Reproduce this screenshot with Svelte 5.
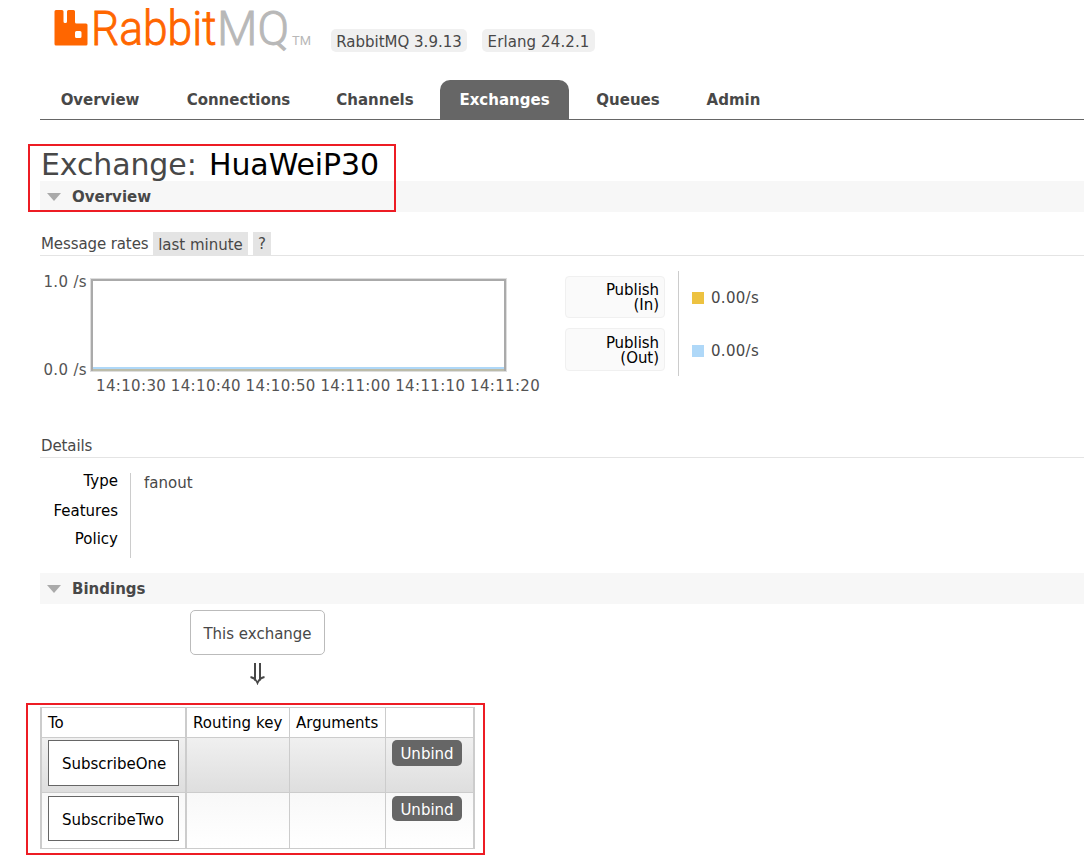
<script>
  const tabs = ['Overview', 'Connections', 'Channels', 'Exchanges', 'Queues', 'Admin'];
  const active = 'Exchanges';
  const times = ['14:10:30', '14:10:40', '14:10:50', '14:11:00', '14:11:10', '14:11:20'];
  const rates = [
    { name: 'Publish', dir: '(In)', color: '#edc240', value: '0.00/s' },
    { name: 'Publish', dir: '(Out)', color: '#afd8f8', value: '0.00/s' }
  ];
  const queues = ['SubscribeOne', 'SubscribeTwo'];
</script>

<div class="page">
  <header>
    <svg class="logo" width="260" height="58" viewBox="0 0 260 58" role="img" aria-label="RabbitMQ">
      <path fill="#f60" fill-rule="evenodd" d="M1.500 10h5.500q1.500 0 1.500 1.500V21.500q0 1.500 1.500 1.500h.5q1.500 0 1.500-1.500V11.500q0-1.500 1.500-1.500h5q1.500 0 1.500 1.500V22q0 1.500 1.500 1.500h9.500q1.500 0 1.500 1.500v19q0 1.500-1.500 1.500h-30q-1.500 0-1.500-1.500v-32.500q0-1.500 1.500-1.500zM21.500 31q-1.500 0-1.500 1.500v4q0 1.500 1.500 1.500h3.500q1.500 0 1.500-1.500v-4q0-1.500-1.500-1.500z" />
      <text x="36" y="45" class="word rabbit" textLength="125.500" lengthAdjust="spacingAndGlyphs">Rabbit</text>
      <text x="162" y="45" class="word mq" textLength="72" lengthAdjust="spacingAndGlyphs">MQ</text>
      <text x="237" y="45" class="tm" fill="#b8b8b8" textLength="19" lengthAdjust="spacingAndGlyphs">TM</text>
    </svg>
    <span class="badge first">RabbitMQ 3.9.13</span>
    <span class="badge second">Erlang 24.2.1</span>
  </header>

  <nav>
    {#each tabs as tab}
      <span class="tab" class:active={tab === active}>{tab}</span>
    {/each}
  </nav>

  <h1>Exchange: <b>HuaWeiP30</b></h1>
  <h2><i class="tri"></i>Overview</h2>

  <div class="subhead rates-head">
    <span class="label">Message rates</span><span class="chip">last minute</span><span class="chip help">?</span>
  </div>

  <section class="rates">
    <div class="yaxis"><span>1.0 /s</span><span>0.0 /s</span></div>
    <div class="plot">
      <div class="chart"><div class="in"></div><div class="out"></div></div>
      <div class="xaxis">{#each times as t}<span>{t}</span>{/each}</div>
    </div>
    <div class="buttons">
      {#each rates as r}<div class="rate"><span>{r.name}</span><span>{r.dir}</span></div>{/each}
    </div>
    <div class="values">
      {#each rates as r}
        <div class="value"><i class="swatch" style="background:{r.color}"></i>{r.value}</div>
      {/each}
    </div>
  </section>

  <div class="subhead details-head"><span class="label">Details</span></div>
  <section class="details">
    <div class="keys"><span>Type</span><span>Features</span><span>Policy</span></div>
    <div class="facts">fanout</div>
  </section>

  <h2><i class="tri"></i>Bindings</h2>
  <div class="bindings">
    <div class="this">This exchange</div>
    <svg class="arrow" width="17" height="22" viewBox="0 0 17 22" fill="none" stroke="#484848">
      <path stroke-width="2" d="M6 0v17.500M11 0v17.500" />
      <path stroke-width="1.800" d="M1.500 14q5 1 7 6q2-5 7-6" />
    </svg>
  </div>

  <div class="table">
    <div class="cell head">To</div>
    <div class="cell head thick routing">Routing key</div>
    <div class="cell head">Arguments</div>
    <div class="cell head"></div>
    {#each queues as q, i}
      <div class="cell" class:alt={i === 0} class:plain={i === 1}><span class="queue">{q}</span></div>
      <div class="cell thick" class:alt={i === 0} class:plain={i === 1}></div>
      <div class="cell" class:alt={i === 0} class:plain={i === 1}></div>
      <div class="cell" class:alt={i === 0} class:plain={i === 1}><button>Unbind</button></div>
    {/each}
  </div>

  <div class="mark title-mark"></div>
  <div class="mark table-mark"></div>
</div>

<style>
  :global(body) { margin: 0; background: #fff; overflow: hidden; }
  * { box-sizing: border-box; }
  .page {
    position: relative; width: 1084px; height: 867px; padding-left: 40px; overflow: hidden;
    font: 15px/18px Verdana, "DejaVu Sans", sans-serif; color: #484848; white-space: nowrap;
  }
  header { display: flex; height: 80px; padding-left: 15px; }
  .logo { flex: none; overflow: visible; }
  .word { font: 300 48px Roboto, sans-serif; stroke-width: 0.9px; }
  .rabbit { fill: #f60; stroke: #f60; }
  .mq { fill: #b8b8b8; stroke: #b8b8b8; }
  .tm { font: 13px Roboto, sans-serif; }
  .badge { margin-top: 29px; height: 23px; line-height: 26px; border-radius: 5px; background: #f0f0f0; text-align: center; }
  .first { width: 136px; margin-left: 16px; }
  .second { width: 113px; margin-left: 15px; letter-spacing: 0.100px; }

  nav { display: grid; grid-template-columns: 120px 143px 116px 129px 104px 93px; column-gap: 7px; height: 40px; border-bottom: 1px solid #666; }
  .tab { font-weight: bold; line-height: 41px; height: 39px; text-align: center; border-radius: 10px 10px 0 0; }
  .tab:nth-child(-n + 2) { letter-spacing: -0.050px; }
  .active { background: #666; color: #fff; }
  nav { margin-right: -1px; }

  h1 { margin: 25px 0 0; height: 36px; line-height: 39px; font-size: 30px; font-weight: normal; padding-left: 1px; letter-spacing: -0.120px; }
  h1 b { font-weight: normal; color: #000; margin-left: 3px; letter-spacing: -0.120px; }
  h2 { display: flex; align-items: center; margin: 0; height: 31px; background: #f7f7f7; font-size: 15px; font-weight: bold; padding-left: 7px; }
  .tri { border: 7.500px solid transparent; border-top: 8px solid #aaa; border-bottom: 0; margin-right: 11px; }

  .subhead { display: flex; border-bottom: 1px solid #e4e4e4; }
  .rates-head { margin-top: 20px; height: 24px; }
  .label { padding-left: 1px; line-height: 24px; letter-spacing: -0.100px; }
  .rates-head .label { width: 113px; }
  .chip { width: 95px; height: 23px; background: #e4e4e4; line-height: 26px; text-align: center; }
  .help { width: 18px; margin-left: 5px; line-height: 24px; }

  .rates { display: flex; height: 178px; color: #545454; }
  .yaxis { width: 47px; padding-top: 17px; display: flex; flex-direction: column; gap: 70px; align-items: flex-end; letter-spacing: 0.350px; }
  .plot { width: 478px; padding: 22px 0 0 3px; }
  .chart { width: 417px; height: 94px; border: 1px solid #ddd; display: flex; flex-direction: column; justify-content: flex-end; box-shadow: inset 0 0 0 2px #aaa; }
  .in { height: 2px; margin: 0 2px; background: #afd8f8; }
  .out { height: 2px; margin: 0 2px; background: #bcbcaa; }
  .xaxis { display: flex; gap: 2.800px; margin: 5px 0 0 6px; letter-spacing: 0.350px; }
  .xaxis span { width: 72px; }
  .buttons { display: flex; flex-direction: column; gap: 10px; width: 113px; padding-top: 20px; color: #000; }
  .rate { display: grid; grid-template-rows: 15px 15px; width: 100px; height: 42px; padding: 6px 5px 0 0; border: 1px solid #f0f0f0; border-radius: 4px; background: #fafafa; line-height: 15px; text-align: right; letter-spacing: -0.050px; }
  .rate + .rate { height: 43px; padding-top: 7px; }
  .values { height: 105px; margin-top: 15px; padding-left: 13px; border-left: 1px solid #ccc; color: #484848; letter-spacing: 0.300px; }
  .value { display: flex; align-items: center; height: 53px; }
  .swatch { width: 12px; height: 12px; margin-right: 7px; }

  .details-head { height: 24px; }
  .details { display: flex; height: 115px; padding-top: 15px; }
  .keys { width: 90px; padding: 0 12px 0 0; display: grid; grid-template-rows: 30px 28px 27px; line-height: 16px; text-align: right; color: #000; }
  .facts { height: 85px; padding-left: 13px; border-left: 1px solid #ccc; line-height: 20px; }

  .bindings { width: 435px; height: 103px; padding-top: 6px; display: flex; flex-direction: column; align-items: center; }
  .this { width: 135px; height: 45px; border: 1px solid #bbb; border-radius: 5px; line-height: 46px; text-align: center; }
  .arrow { margin-top: 8px; }

  .table { display: grid; width: 435px; grid-template-columns: 145px 104px 96px 90px; grid-template-rows: 30px 55px 57px; color: #000; }
  .cell { border-top: 1px solid #ccc; border-left: 1px solid #ccc; padding: 2px 6px; }
  .cell:nth-child(4n + 1), .thick { border-left-width: 2px; }
  .cell:nth-child(4n) { border-right: 2px solid #ccc; }
  .cell:nth-child(n + 9) { border-bottom: 1px solid #ccc; padding-top: 3px; }
  .head { line-height: 26px; }
  .routing { letter-spacing: 0.080px; }
  .alt { background: linear-gradient(#f0f0f0, #dedede); }
  .plain { background: linear-gradient(#f8f8f8, #fff); }
  .queue { display: block; width: 131px; height: 46px; line-height: 46px; border: 1px solid #666; background: #fff; padding-left: 13px; }
  .plain .queue { height: 45px; }
  button { display: block; width: 70px; height: 26px; padding: 2px 0 0; border: 0; border-radius: 5px; background: #666; color: #fff; font: inherit; line-height: 24px; }
  .plain button { height: 25px; }

  .mark { position: absolute; border: 2px solid #ed1c24; }
  .title-mark { left: 28px; top: 144px; width: 368px; height: 68px; }
  .table-mark { left: 26px; top: 703px; width: 459px; height: 152px; }
</style>
